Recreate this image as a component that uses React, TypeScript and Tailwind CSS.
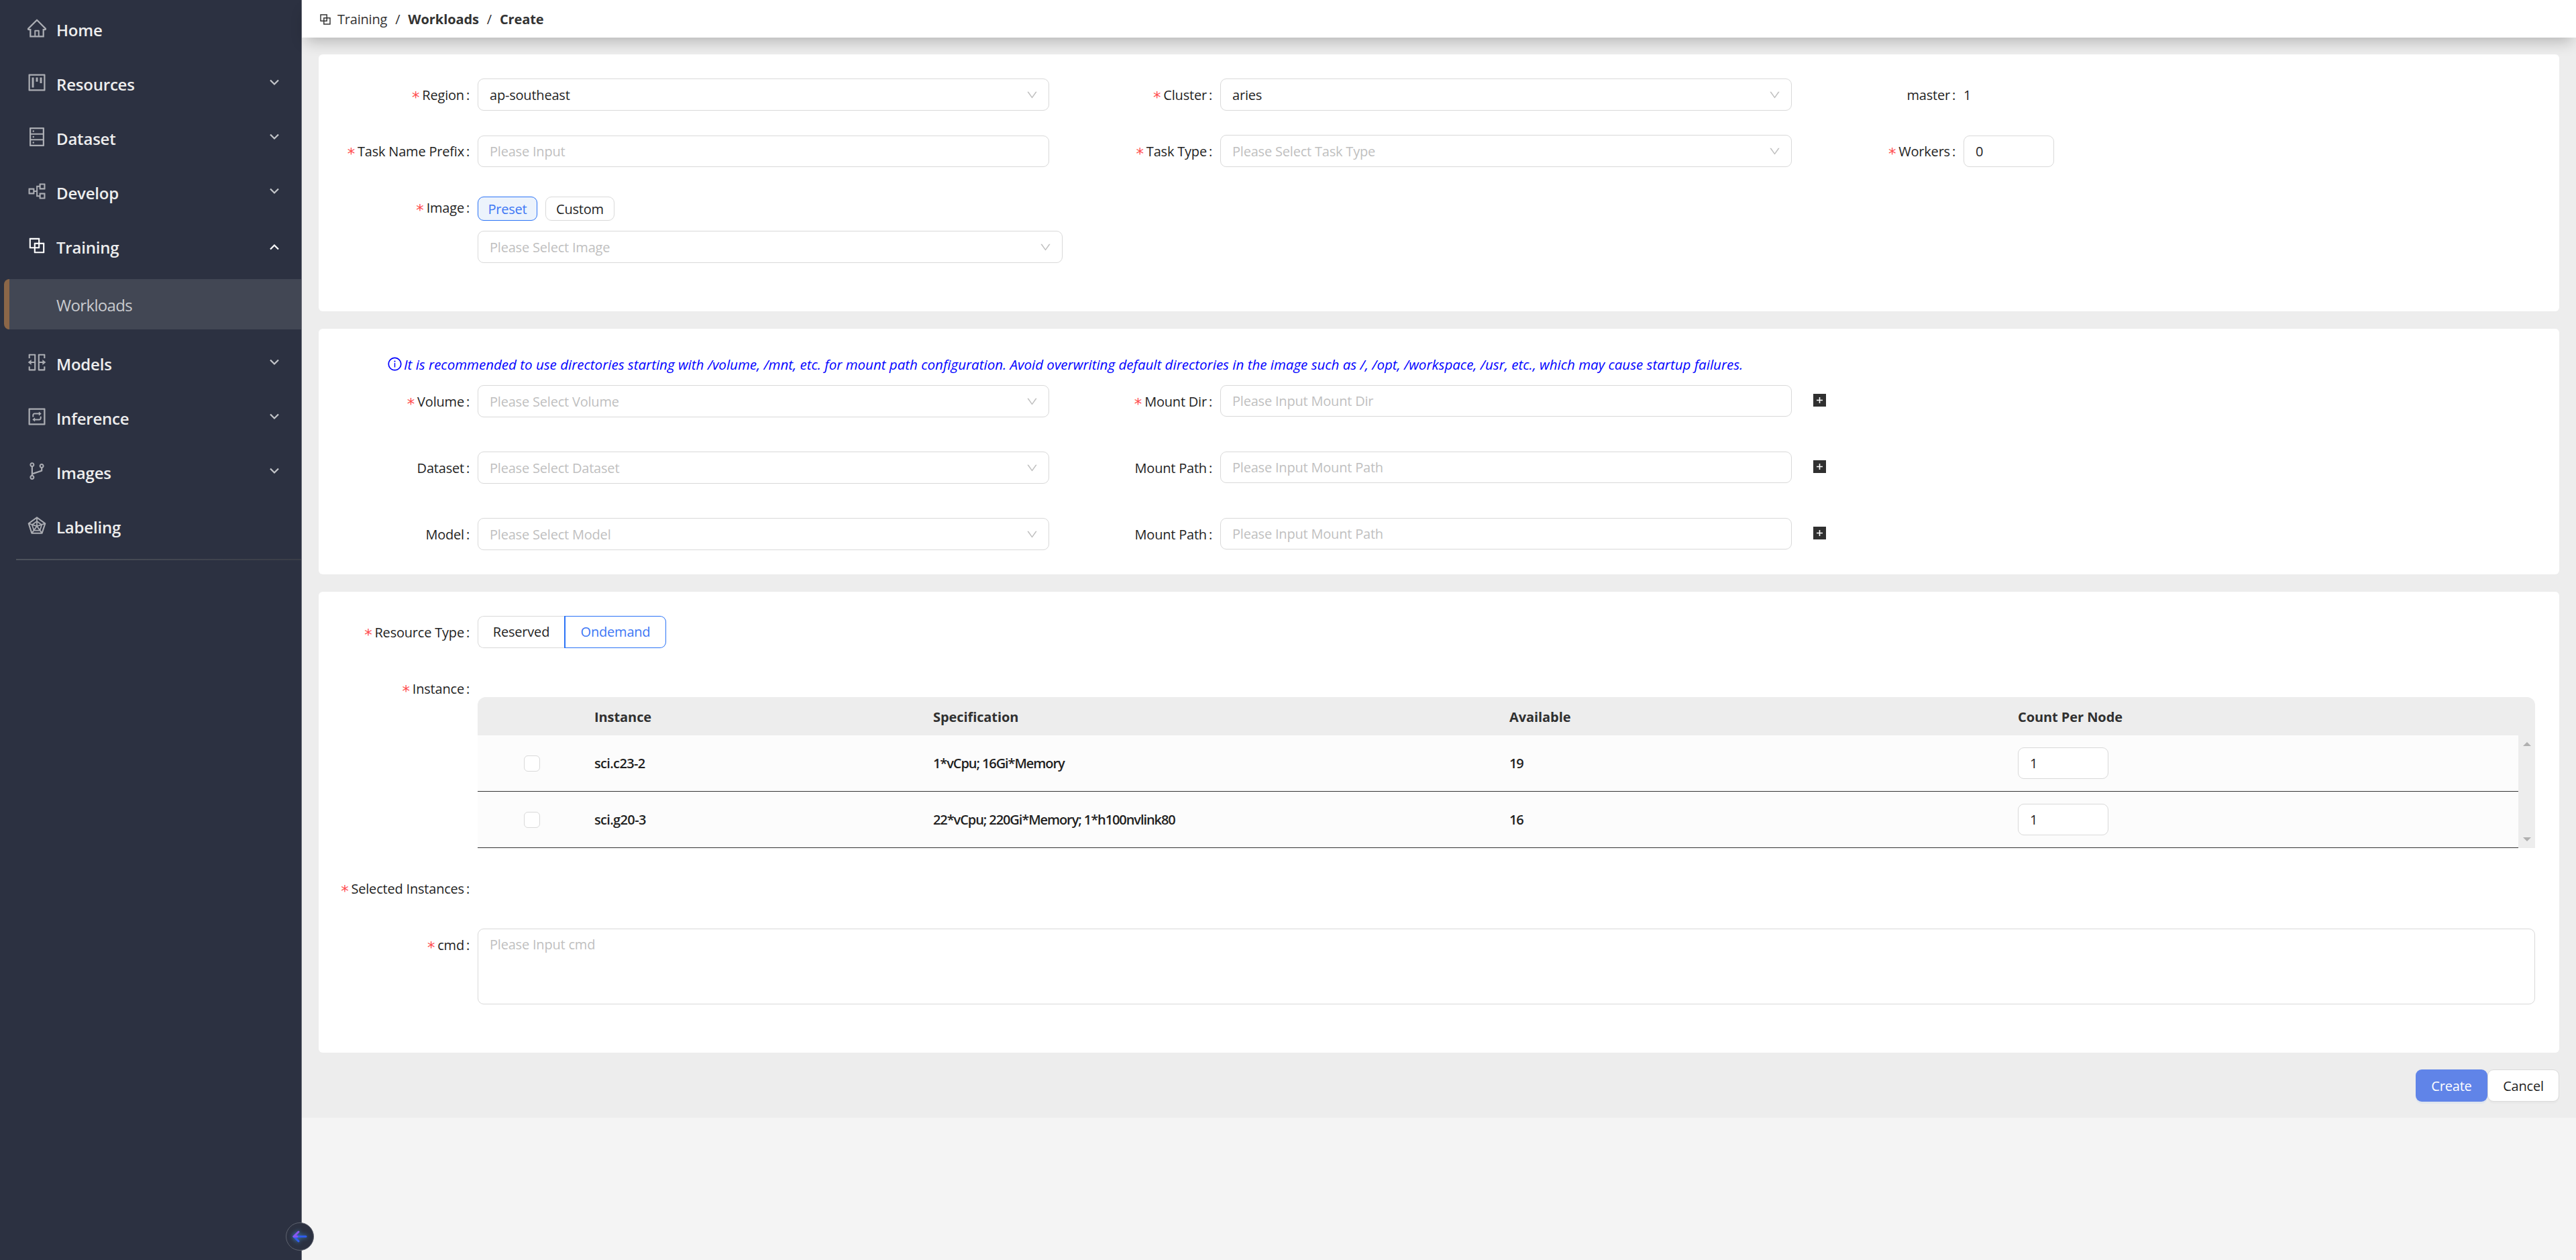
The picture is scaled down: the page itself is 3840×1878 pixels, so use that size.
import type { ReactNode } from "react";
import {
  AiOutlineBlock,
  AiOutlineBranches,
  AiOutlineDatabase,
  AiOutlineDown,
  AiOutlineHome,
  AiOutlineInfoCircle,
  AiOutlineInteraction,
  AiOutlinePartition,
  AiOutlineProject,
  AiOutlineRadarChart,
  AiOutlineSplitCells,
} from "react-icons/ai";
import type { IconType } from "react-icons";
import clsx from "clsx";

type MenuItem = { label: string; icon: IconType; open?: boolean; leaf?: boolean };

const MENU_TOP: MenuItem[] = [
  { label: "Home", icon: AiOutlineHome, leaf: true },
  { label: "Resources", icon: AiOutlineProject },
  { label: "Dataset", icon: AiOutlineDatabase },
  { label: "Develop", icon: AiOutlinePartition },
  { label: "Training", icon: AiOutlineBlock, open: true },
];

const MENU_BOTTOM: MenuItem[] = [
  { label: "Models", icon: AiOutlineSplitCells },
  { label: "Inference", icon: AiOutlineInteraction },
  { label: "Images", icon: AiOutlineBranches },
  { label: "Labeling", icon: AiOutlineRadarChart, leaf: true },
];

const INSTANCES = [
  { name: "sci.c23-2", spec: "1*vCpu; 16Gi*Memory", available: 19 },
  { name: "sci.g20-3", spec: "22*vCpu; 220Gi*Memory; 1*h100nvlink80", available: 16 },
];

function MenuRow({ item }: { item: MenuItem }) {
  const Icon = item.icon;
  return (
    <div className="flex h-[81px] items-center pl-[39px] pr-[33px]">
      <Icon className={clsx("-mt-[5px] h-8 w-8 shrink-0", item.open ? "text-white" : "text-[#abadb3]")} />
      <span className="ml-[13px] flex-1 text-[24px] font-semibold tracking-[-0.2px] text-[#eeeeee]">{item.label}</span>
      {!item.leaf && (
        <svg
          viewBox="0 0 14 10"
          className={clsx("h-[10px] w-[14px]", item.open ? "-mt-0.5 rotate-180 text-white" : "-mt-[6px] text-[#c4c6ca]")}
        >
          <path d="M1 1.5L7 7.5L13 1.5" fill="none" stroke="currentColor" strokeWidth="2.2" />
        </svg>
      )}
    </div>
  );
}

function Sidebar() {
  return (
    <aside className="flex h-full w-[450px] shrink-0 flex-col border-r border-[#6a6e78] bg-[#2c3141] pt-1">
      {MENU_TOP.map((item) => (
        <MenuRow key={item.label} item={item} />
      ))}
      <div className="ml-1.5 mt-[7px] flex h-[75px] items-center rounded-l-lg border-l-8 border-[#8b6648] bg-[#424754] pl-[70px] pt-0.5 text-[24px] tracking-[-0.65px] text-[#c9cbcf]">
        Workloads
      </div>
      <div className="h-[11px]" />
      {MENU_BOTTOM.map((item) => (
        <MenuRow key={item.label} item={item} />
      ))}
      <div className="ml-6 mt-[7px] h-0.5 bg-linear-to-r from-[#4d525c] to-[#3a3d47]" />
    </aside>
  );
}

type LabelProps = { children: ReactNode; required?: boolean; width?: string };

function Label({ children, required, width = "w-[237px]" }: LabelProps) {
  return (
    <div className={clsx("flex h-12 shrink-0 items-center justify-end whitespace-nowrap pr-3 pt-0.5", width)}>
      {required && (
        <span className="mr-1 mt-[7px] font-['DejaVu_Sans'] text-[23px] leading-none text-[#ff4d4f]">*</span>
      )}
      {children}
      <span className="ml-[3px]">:</span>
    </div>
  );
}

type FieldProps = { value?: string; placeholder?: string; width?: string };

function Select({ value, placeholder, width = "w-[852px]" }: FieldProps) {
  return (
    <div
      className={clsx(
        "flex h-12 shrink-0 items-center justify-between rounded-[9px] border border-[#d9d9d9] bg-white pl-[17px] pr-[15px]",
        width,
      )}
    >
      <span className={clsx("pt-0.5", value ? "text-[#1f1f1f]" : "text-[#bfbfbf]")}>{value ?? placeholder}</span>
      <AiOutlineDown className="h-[19px] w-[19px] text-[#bfbfbf]" />
    </div>
  );
}

function Input({ value, placeholder, width = "w-[852px]" }: FieldProps) {
  return (
    <div
      className={clsx(
        "flex h-[47px] shrink-0 items-center rounded-[9px] border border-[#d9d9d9] bg-white px-[17px] pt-px",
        width,
      )}
    >
      <span className={value ? "text-[#1f1f1f]" : "text-[#bfbfbf]"}>{value ?? placeholder}</span>
    </div>
  );
}

function AddButton() {
  return (
    <svg viewBox="0 0 19 19" className="ml-8 mt-[13px] h-[19px] w-[19px]">
      <rect width="19" height="19" fill="#303030" />
      <path d="M9.5 5V14M5 9.5H14" stroke="#fff" strokeWidth="1.6" />
    </svg>
  );
}

type MountRowProps = { label: string; select: string; dirLabel: string; input: string; required?: boolean };

function MountRow({ label, select, dirLabel, input, required }: MountRowProps) {
  return (
    <div className="flex h-[99px] items-start">
      <Label required={required}>{label}</Label>
      <Select placeholder={select} />
      <Label required={required} width="w-[255px]">
        {dirLabel}
      </Label>
      <Input placeholder={input} />
      <AddButton />
    </div>
  );
}

function InstanceTable() {
  return (
    <div className="mt-[37px] flex-1">
      <div className="flex h-[57px] items-center rounded-t-xl bg-[#ededed] pt-0.5 font-bold tracking-[-0.08px] text-[#303030]">
        <div className="w-[174px]" />
        <div className="w-[505px]">Instance</div>
        <div className="w-[859px]">Specification</div>
        <div className="w-[758px]">Available</div>
        <div>Count Per Node</div>
      </div>
      <div className="flex">
        <div className="flex-1">
          {INSTANCES.map((row) => (
            <div
              key={row.name}
              className="flex h-[84px] items-center border-b border-[#333] bg-[#fcfcfc] font-semibold tracking-[-0.65px] text-[#1f1f1f]"
            >
              <div className="w-[174px] pl-[69px]">
                <div className="h-6 w-6 rounded-md border border-[#d9d9d9] bg-white" />
              </div>
              <div className="w-[505px]">{row.name}</div>
              <div className="w-[859px] tracking-[-1.08px]">{row.spec}</div>
              <div className="w-[758px] tracking-[-1.2px]">{row.available}</div>
              <div className="font-normal">
                <Input value="1" width="w-[135px]" />
              </div>
            </div>
          ))}
        </div>
        <div className="flex w-[25px] flex-col items-center justify-between bg-[#ededed] py-[10px]">
          <svg viewBox="0 0 12 6" className="h-1.5 w-3">
            <path d="M0 6L6 0L12 6Z" fill="#b0b0b0" />
          </svg>
          <svg viewBox="0 0 12 6" className="h-1.5 w-3">
            <path d="M0 0L6 6L12 0Z" fill="#b0b0b0" />
          </svg>
        </div>
      </div>
    </div>
  );
}

export default function App() {
  return (
    <div className="relative flex h-[1878px] w-[3840px] overflow-hidden bg-[#f4f4f4] font-['Open_Sans',sans-serif] text-[20px] leading-[30px] tracking-[-0.2px] text-[#1f1f1f]">
      <Sidebar />
      <main className="flex flex-1 flex-col">
        <header className="relative z-10 flex h-14 shrink-0 items-center bg-white pl-6 pt-px text-[#333] shadow-[0_12px_22px_-6px_rgba(0,0,0,0.24)]">
          <AiOutlineBlock className="h-[22px] w-[22px]" />
          <span className="ml-[7px]">Training</span>
          <span className="mx-3">/</span>
          <span className="font-bold tracking-[-0.1px]">Workloads</span>
          <span className="mx-3">/</span>
          <span className="font-bold tracking-[-0.1px]">Create</span>
        </header>

        <div className="flex h-[1610px] flex-col bg-[#ededed] px-[25px] pt-[25px]">
          <section className="h-[383px] rounded-md bg-white pt-9">
            <div className="flex h-[84px] items-start">
              <Label required>Region</Label>
              <Select value="ap-southeast" />
              <Label required width="w-[255px]">
                Cluster
              </Label>
              <Select value="aries" />
              <Label width="w-[256px]">master</Label>
              <div className="flex h-12 items-center pt-0.5">1</div>
            </div>
            <div className="flex h-[84px] items-start">
              <Label required>Task Name Prefix</Label>
              <div className="pt-px">
                <Input placeholder="Please Input" />
              </div>
              <Label required width="w-[255px]">
                Task Type
              </Label>
              <Select placeholder="Please Select Task Type" />
              <Label required width="w-[256px]">
                Workers
              </Label>
              <div className="pt-px">
                <Input value="0" width="w-[135px]" />
              </div>
            </div>
            <div className="flex items-start">
              <Label required>Image</Label>
              <div className="pt-2">
                <div className="flex gap-3">
                  <div className="flex h-9 w-[89px] items-center justify-center rounded-[9px] border border-[#2b73f6] bg-[#ecf3fc] pt-0.5 text-[#3d77f5]">
                    Preset
                  </div>
                  <div className="flex h-9 w-[103px] items-center justify-center rounded-[9px] border border-[#d9d9d9] bg-white pt-0.5">
                    Custom
                  </div>
                </div>
                <div className="pt-[15px]">
                  <Select placeholder="Please Select Image" width="w-[872px]" />
                </div>
              </div>
            </div>
          </section>

          <section className="mt-[26px] h-[366px] rounded-md bg-white pt-[38px]">
            <div className="flex h-[46px] items-start pl-[102px] text-[20.5px] italic tracking-[0.01px] text-[#0000ff]">
              <AiOutlineInfoCircle className="mt-[3px] h-[23px] w-[23px]" />
              <span className="ml-0.5 whitespace-nowrap">
                It is recommended to use directories starting with /volume, /mnt, etc. for mount path configuration. Avoid
                overwriting default directories in the image such as /, /opt, /workspace, /usr, etc., which may cause startup
                failures.
              </span>
            </div>
            <MountRow
              required
              label="Volume"
              select="Please Select Volume"
              dirLabel="Mount Dir"
              input="Please Input Mount Dir"
            />
            <MountRow
              label="Dataset"
              select="Please Select Dataset"
              dirLabel="Mount Path"
              input="Please Input Mount Path"
            />
            <MountRow label="Model" select="Please Select Model" dirLabel="Mount Path" input="Please Input Mount Path" />
          </section>

          <section className="mt-[26px] h-[687px] rounded-md bg-white pr-9 pt-9">
            <div className="flex h-[84px] items-start">
              <Label required>Resource Type</Label>
              <div className="flex h-12 w-[129px] items-center justify-center rounded-l-[9px] border border-r-0 border-[#d9d9d9]">
                Reserved
              </div>
              <div className="flex h-12 w-[152px] items-center justify-center rounded-r-[9px] border border-l-2 border-[#2b73f6] text-[#3d77f5]">
                Ondemand
              </div>
            </div>
            <div className="flex h-[298px] items-start">
              <Label required>Instance</Label>
              <InstanceTable />
            </div>
            <div className="flex h-[84px] items-start">
              <Label required>Selected Instances</Label>
            </div>
            <div className="flex items-start">
              <Label required>cmd</Label>
              <div className="h-[113px] flex-1 rounded-[9px] border border-[#d9d9d9] px-[17px] pt-2 text-[#bfbfbf]">
                Please Input cmd
              </div>
            </div>
          </section>

          <div className="mt-[25px] flex justify-end">
            <div className="flex h-12 w-[107px] items-center justify-center rounded-[9px] bg-[#6084e8] pt-0.5 text-white shadow-[0_3px_0_rgba(5,95,255,0.06)]">
              Create
            </div>
            <div className="flex h-12 w-[107px] items-center justify-center rounded-[9px] border border-[#d9d9d9] bg-white pt-0.5 shadow-[0_3px_0_rgba(0,0,0,0.02)]">
              Cancel
            </div>
          </div>
        </div>
      </main>

      {/* Sidebar collapse handle */}
      <div className="absolute bottom-[14px] left-[426px] z-20 flex h-[42px] w-[42px] items-center justify-center rounded-full border border-[#5d626e] bg-[#2c3141]">
        <svg
          viewBox="0 0 24 24"
          className="h-6 w-6 drop-shadow-[0_0_3px_#3f8fd0]"
          fill="none"
          strokeWidth="3"
          strokeLinecap="round"
        >
          <path d="M3 12L10 19" stroke="#2f5cf0" />
          <path d="M3 12H21" stroke="#2f5cf0" />
          <path d="M10 5L3 12H8" stroke="#8a55f0" strokeLinejoin="round" />
        </svg>
      </div>
    </div>
  );
}
